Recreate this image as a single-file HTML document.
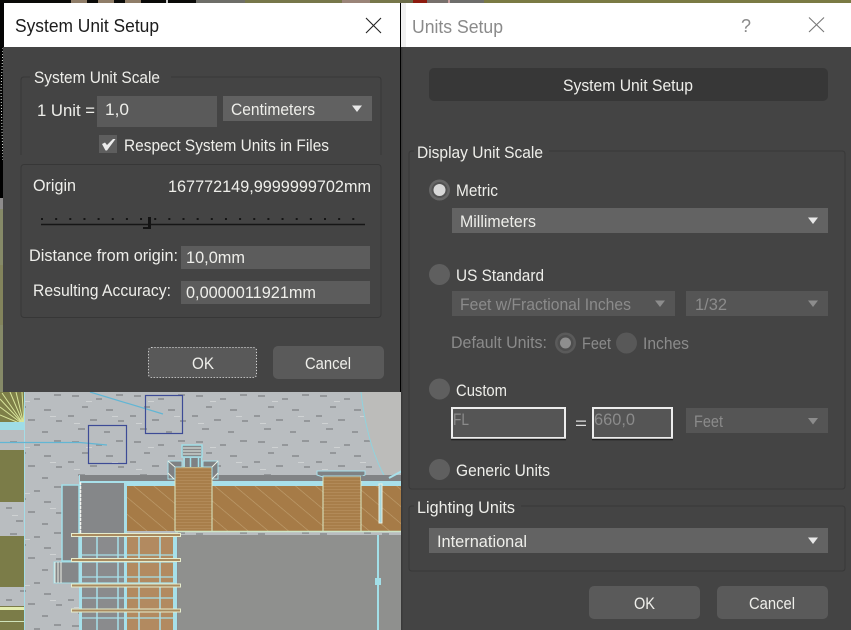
<!DOCTYPE html>
<html><head><meta charset="utf-8"><style>
html,body{margin:0;padding:0;width:851px;height:630px;overflow:hidden;background:#444}
svg{display:block}
text{font-family:"Liberation Sans",sans-serif;font-size:16.5px;fill:#eeeeea}
.d{fill:#8b8b8b}
</style></head><body>
<svg width="851" height="630" viewBox="0 0 851 630" xmlns="http://www.w3.org/2000/svg">
<defs>
<pattern id="b" width="62" height="46" patternUnits="userSpaceOnUse" x="4" y="392">
<g fill="#94979a">
<rect x="6" y="3" width="7" height="2"/><rect x="30" y="6" width="6" height="2"/><rect x="50" y="2" width="7" height="2"/>
<rect x="16" y="14" width="6" height="2"/><rect x="40" y="17" width="7" height="2"/><rect x="2" y="23" width="6" height="2"/>
<rect x="24" y="27" width="7" height="2"/><rect x="52" y="28" width="6" height="2"/><rect x="12" y="36" width="7" height="2"/><rect x="38" y="39" width="6" height="2"/>
</g>
<g fill="#cfd2d3"><rect x="20" y="9" width="6" height="1"/><rect x="46" y="24" width="6" height="1"/><rect x="8" y="31" width="6" height="1"/></g>
</pattern>
<pattern id="w" width="13" height="13" patternUnits="userSpaceOnUse" patternTransform="rotate(40)">
<rect width="13" height="13" fill="#a67b47"/><rect width="13" height="0.600" fill="#c0a070"/>
</pattern>
<pattern id="h" width="3" height="3" patternUnits="userSpaceOnUse">
<rect width="3" height="3" fill="#a87e4a"/><rect width="3" height="0.500" fill="#bb9566"/>
</pattern>
</defs>

<!-- background strips -->
<rect width="851" height="630" fill="#000"/>
<rect x="0" y="0" width="400" height="3" fill="#0a0a08"/>
<rect x="71" y="0" width="16" height="3" fill="#8f7d68"/><rect x="98" y="0" width="16" height="3" fill="#8f7d68"/>
<rect x="125" y="0" width="16" height="3" fill="#8f7d68"/>
<rect x="166" y="0" width="2" height="3" fill="#cccccc"/>
<rect x="196" y="0" width="49" height="3" fill="#6e6e68"/>
<rect x="245" y="0" width="97" height="3" fill="#77774a"/>
<rect x="342" y="0" width="28" height="3" fill="#9a8478"/>
<rect x="370" y="0" width="30" height="3" fill="#77774a"/>
<rect x="400" y="0" width="13" height="3" fill="#6a6a48"/>
<rect x="413" y="0" width="14" height="3" fill="#8d1b0e"/>
<rect x="427" y="0" width="21" height="3" fill="#77706c"/>
<rect x="448" y="0" width="2" height="3" fill="#c9a0a0"/>
<rect x="450" y="0" width="34" height="3" fill="#6e6e6c"/>
<rect x="484" y="0" width="367" height="3" fill="#7a7a44"/>
<!-- left strip -->
<rect x="0" y="3" width="4" height="155" fill="#050505"/>
<path d="M3 48 L1 90 L2 130 L3 160" stroke="#dfe5df" stroke-width="1" stroke-dasharray="1 2" fill="none"/>
<rect x="0" y="195" width="3" height="197" fill="#868a68"/>
<rect x="0" y="195" width="3" height="14" fill="#8e8c8c"/>
<rect x="0" y="265" width="3" height="60" fill="#83845c"/>
<rect x="0" y="160" width="3" height="38" fill="#000"/>

<!-- CAD drawing -->
<g>
<rect x="0" y="392" width="402" height="238" fill="#b9bdc0"/>
<rect x="0" y="392" width="402" height="238" fill="url(#b)"/>
<path d="M361 392 Q367 450 385 477 L402 472 L402 392 Z" fill="#bcbcba"/>
<path d="M361 392 Q367 445 385 477" stroke="#8fd3de" stroke-width="1" fill="none"/>
<!-- left olive parts -->
<rect x="0" y="392" width="24" height="36" fill="#7e7f48"/>
<path d="M24 425 L2 393 M24 425 L10 392 M24 425 L16 392 M24 425 L22 392 M24 425 L0 399 M24 425 L0 407 M24 425 L0 415" stroke="#d8e49a" stroke-width="1"/>
<rect x="0" y="422" width="25" height="8" fill="#9fdce6"/>
<rect x="0" y="450" width="24" height="52" fill="#7b7c48"/>
<rect x="0" y="536" width="24" height="51" fill="#7b7c48"/>
<rect x="0" y="606" width="25" height="24" fill="#7b7c48"/>
<rect x="0" y="607" width="25" height="3" fill="#e4edb0"/>
<rect x="0" y="621" width="25" height="1" fill="#cfe3ba"/>
<path d="M24.500 392V630" stroke="#a5dce6" stroke-width="1"/>
<path d="M0 442.500H80L107 445" stroke="#62b6d4" stroke-width="1.200" fill="none"/>
<path d="M90 392L163 414" stroke="#62b6d4" stroke-width="1.200"/>
<rect x="88.500" y="425.500" width="38" height="38" fill="none" stroke="#3d4b96" stroke-width="1.200"/>
<rect x="145.500" y="395.500" width="37" height="38" fill="none" stroke="#3d4b96" stroke-width="1.200"/>
<!-- top wall band -->
<rect x="79" y="475" width="323" height="6" fill="#818385"/>
<rect x="79" y="481" width="323" height="5" fill="#a8e0ea"/>
<path d="M79.500 475V535" stroke="#a8e0ea" stroke-width="1"/>
<!-- wood -->
<rect x="127" y="486" width="275" height="45" fill="url(#w)"/>
<rect x="175" y="467" width="37" height="64" fill="url(#h)"/>
<rect x="323" y="476" width="38" height="55" fill="url(#h)"/>
<path d="M175 531V467H212V531M323 531V476H361V531" fill="none" stroke="#dbe9c4" stroke-width="1"/>
<rect x="379" y="484" width="3" height="39" fill="#a5d5da" stroke="#e8f0e0" stroke-width="1"/>
<!-- caps -->
<path d="M168 461H182V467H175V479H168Z" fill="#7f8183" stroke="#a8e0ea" stroke-width="1"/>
<path d="M218 461H203V467H212V479H218Z" fill="#7f8183" stroke="#a8e0ea" stroke-width="1"/>
<path d="M168 461L175 467M218 461L212 467M168 473L174 479M218 473L212 479" stroke="#eef2e8" stroke-width="1"/>
<path d="M317 471H365V475L361 477V476H323V477L317 475Z" fill="#7f8183" stroke="#a8e0ea" stroke-width="1"/>
<rect x="361" y="476" width="28" height="5" fill="#818385"/>
<path d="M389 478L402 471" stroke="#a8e0ea" stroke-width="2"/>
<!-- top detail -->
<rect x="182" y="445" width="20" height="12" fill="#88898b" stroke="#a2dfe8" stroke-width="1.500"/>
<path d="M183 448H201M183 451H201M183 454H201" stroke="#e6eee8" stroke-width="1"/>
<path d="M185 458H201V467H185Z" fill="#7f8183"/>
<path d="M190.500 458v9M198.500 458v9M184 458v9M201.500 458v9" stroke="#a2dfe8" stroke-width="1.500"/>
<!-- left grey block -->
<rect x="62" y="485" width="17" height="76" fill="#838486" stroke="#a2dfe8" stroke-width="1.500"/>
<rect x="81" y="483" width="44" height="50" fill="#858789"/>
<path d="M80.500 482V533" stroke="#f2f4f0" stroke-width="1.500" stroke-dasharray="3 1"/>
<rect x="124" y="483" width="3" height="50" fill="#a8dde6"/>
<rect x="54" y="562" width="25" height="21" fill="#858789" stroke="#a2dfe8" stroke-width="1"/>
<path d="M55 562v21M58 562v21M61 562v21" stroke="#eef2e8" stroke-width="1"/>
<!-- floor -->
<rect x="178" y="535" width="224" height="95" fill="#8f908e"/>
<!-- lower grid -->
<rect x="79" y="535" width="99" height="95" fill="#8a8b8d"/>
<rect x="127" y="535" width="48" height="95" fill="#b28a60"/>
<path d="M97 535V630M118 535V630M139 535V630M160 535V630" stroke="#a6e0ea" stroke-width="1.500" fill="none"/>
<path d="M80 555H177M80 562H177M80 577H177M80 583H177M80 598H177M80 618H177" stroke="#a6e0ea" stroke-width="1.200"/>
<rect x="79" y="535" width="3" height="95" fill="#a6e0ea"/>
<rect x="173" y="535" width="4" height="95" fill="#a6e0ea"/>
<rect x="124" y="535" width="3" height="95" fill="#a6e0ea"/>
<path d="M175 531.500H402" stroke="#cde6c8" stroke-width="1.500"/>
<g fill="#a98b60" stroke="#e6eccc" stroke-width="1">
<rect x="71.500" y="533.500" width="109" height="3"/>
<rect x="71.500" y="558.500" width="109" height="3"/>
<rect x="71.500" y="584" width="109" height="3"/>
<rect x="71.500" y="609" width="109" height="3"/>
</g>
<path d="M378 535V630" stroke="#a2dfe8" stroke-width="2"/>
<rect x="375" y="578" width="6" height="7" fill="#a2dfe8"/>
</g>

<!-- LEFT dialog -->
<rect x="3" y="47" width="397" height="345" fill="#444444"/>
<rect x="4" y="3" width="396" height="44" fill="#ffffff"/>
<text x="15" y="32" style="font-size:18px;fill:#1c1c1c" textLength="144" lengthAdjust="spacingAndGlyphs">System Unit Setup</text>
<path d="M366 18L381 33M381 18L366 33" stroke="#222" stroke-width="1.100" fill="none"/>

<path d="M21 155V80q0-3 3-3H30M171 77H378q3 0 3 3V155" fill="none" stroke="#373737" stroke-width="1"/>
<text x="34" y="83" textLength="126" lengthAdjust="spacingAndGlyphs">System Unit Scale</text>
<text x="37" y="116" textLength="58" lengthAdjust="spacingAndGlyphs">1 Unit =</text>
<rect x="97" y="96" width="120" height="31" fill="#5a5a5a"/>
<text x="105" y="115" textLength="24" lengthAdjust="spacingAndGlyphs">1,0</text>
<rect x="223" y="96" width="149" height="25" fill="#616161"/>
<text x="231" y="115" textLength="84" lengthAdjust="spacingAndGlyphs">Centimeters</text>
<path d="M352 105.500H362L357 112Z" fill="#e8e8e8"/>
<rect x="99" y="135" width="18" height="18" fill="#5e5e5e"/>
<path d="M102 144L105 142.500L107 145L113 139H115.500L107 150.500H105.500Z" fill="#ececec"/>
<text x="124" y="151" textLength="205" lengthAdjust="spacingAndGlyphs">Respect System Units in Files</text>

<rect x="21" y="164.500" width="360" height="153" rx="3" fill="none" stroke="#373737" stroke-width="1"/>
<text x="33" y="191" textLength="43" lengthAdjust="spacingAndGlyphs">Origin</text>
<text x="168" y="192" textLength="203" lengthAdjust="spacingAndGlyphs">167772149,9999999702mm</text>
<path d="M41 219H366" stroke="#141414" stroke-width="2" stroke-dasharray="2 12.150"/>
<path d="M41 224.500H365" stroke="#161616" stroke-width="1.500"/>
<path d="M148 217H151V229H143V227H148Z" fill="#141414"/>
<text x="29" y="261" textLength="149" lengthAdjust="spacingAndGlyphs">Distance from origin:</text>
<rect x="181" y="246" width="189" height="23" fill="#5c5c5c"/>
<text x="186" y="263" textLength="59" lengthAdjust="spacingAndGlyphs">10,0mm</text>
<text x="33" y="296" textLength="138" lengthAdjust="spacingAndGlyphs">Resulting Accuracy:</text>
<rect x="181" y="281" width="189" height="23" fill="#5c5c5c"/>
<text x="186" y="298" textLength="130" lengthAdjust="spacingAndGlyphs">0,0000011921mm</text>

<rect x="148" y="347" width="109" height="31" rx="4" fill="#595959"/>
<rect x="148.500" y="347.500" width="108" height="30" rx="3" fill="none" stroke="#e6e6e6" stroke-width="1" stroke-dasharray="1 2"/>
<text x="192" y="369" textLength="22" lengthAdjust="spacingAndGlyphs">OK</text>
<rect x="273" y="346" width="111" height="33" rx="5" fill="#5a5a5a"/>
<text x="305" y="369" textLength="46" lengthAdjust="spacingAndGlyphs">Cancel</text>

<!-- RIGHT dialog -->
<rect x="401" y="47" width="450" height="583" fill="#444444"/>
<rect x="401" y="47" width="1.500" height="583" fill="#3a3a3a"/>
<rect x="401" y="3" width="450" height="44" fill="#ffffff"/>
<rect x="401" y="3" width="5" height="44" fill="#f0f0f0"/>
<text x="412" y="33" style="font-size:18px;fill:#8a8a8a" textLength="91" lengthAdjust="spacingAndGlyphs">Units Setup</text>
<text x="741" y="32" style="font-size:18px;fill:#8a8a8a">?</text>
<path d="M809 17.500L824 32M824 17.500L809 32" stroke="#777" stroke-width="1.100" fill="none"/>

<rect x="429" y="68" width="399" height="33" rx="5" fill="#373737"/>
<text x="563" y="91" textLength="130" lengthAdjust="spacingAndGlyphs">System Unit Setup</text>

<path d="M409 486V154q0-3 3-3H414M549 151H842q3 0 3 3V486q0 3-3 3H412q-3 0-3-3" fill="none" stroke="#383838" stroke-width="1"/>
<text x="417" y="158" textLength="126" lengthAdjust="spacingAndGlyphs">Display Unit Scale</text>

<circle cx="439.500" cy="190" r="10.500" fill="#666"/>
<circle cx="439.500" cy="190" r="8" fill="#525252"/>
<circle cx="439.500" cy="190" r="6" fill="#d8d8d8"/>
<text x="456" y="196" textLength="42" lengthAdjust="spacingAndGlyphs">Metric</text>
<rect x="452" y="208" width="376" height="25" fill="#636363"/>
<text x="460" y="227" textLength="76" lengthAdjust="spacingAndGlyphs">Millimeters</text>
<path d="M808 217.500H818L813 224Z" fill="#e8e8e8"/>

<circle cx="439.500" cy="274.500" r="10.500" fill="#5f5f5f"/>
<text x="456" y="281" textLength="88" lengthAdjust="spacingAndGlyphs">US Standard</text>
<rect x="452" y="291" width="223" height="25" fill="#555555"/>
<text x="460" y="310" class="d" textLength="171" lengthAdjust="spacingAndGlyphs">Feet w/Fractional Inches</text>
<path d="M655 300.500H665L660 307Z" fill="#8c8c8c"/>
<rect x="686" y="291" width="142" height="25" fill="#555555"/>
<text x="695" y="310" class="d" textLength="32" lengthAdjust="spacingAndGlyphs">1/32</text>
<path d="M808 300.500H818L813 307Z" fill="#8c8c8c"/>

<text x="451" y="348" class="d" textLength="96" lengthAdjust="spacingAndGlyphs">Default Units:</text>
<circle cx="565.500" cy="343" r="10.500" fill="#5a5a5a"/>
<circle cx="565.500" cy="343" r="8" fill="#4e4e4e"/>
<circle cx="565.500" cy="343" r="5.500" fill="#8e8e8e"/>
<text x="582" y="349" class="d" textLength="29" lengthAdjust="spacingAndGlyphs">Feet</text>
<circle cx="626.500" cy="343" r="10.500" fill="#585858"/>
<text x="643" y="349" class="d" textLength="46" lengthAdjust="spacingAndGlyphs">Inches</text>

<circle cx="439.500" cy="389" r="10.500" fill="#5f5f5f"/>
<text x="456" y="396" textLength="51" lengthAdjust="spacingAndGlyphs">Custom</text>
<rect x="452" y="408" width="113" height="30" fill="#555555" stroke="#ededed" stroke-width="2"/>
<path d="M451 439.500H566" stroke="#1e1e1e" stroke-width="1.500"/>
<text x="453" y="425" class="d" textLength="16" lengthAdjust="spacingAndGlyphs">FL</text>
<text x="575" y="429" style="fill:#dddddd" textLength="12" lengthAdjust="spacingAndGlyphs">=</text>
<rect x="593" y="408" width="79" height="30" fill="#555555" stroke="#ededed" stroke-width="2"/>
<path d="M592 439.500H673" stroke="#1e1e1e" stroke-width="1.500"/>
<text x="594" y="425" class="d" textLength="41" lengthAdjust="spacingAndGlyphs">660,0</text>
<rect x="686" y="408" width="142" height="25" fill="#555555"/>
<text x="694" y="427" class="d" textLength="29" lengthAdjust="spacingAndGlyphs">Feet</text>
<path d="M808 418H818L813 424.500Z" fill="#8c8c8c"/>

<circle cx="439.500" cy="469.500" r="10.500" fill="#5f5f5f"/>
<text x="456" y="476" textLength="94" lengthAdjust="spacingAndGlyphs">Generic Units</text>

<path d="M409 568V509q0-3 3-3H414M521 506H842q3 0 3 3V568q0 3-3 3H412q-3 0-3-3" fill="none" stroke="#383838" stroke-width="1"/>
<text x="417" y="513" textLength="98" lengthAdjust="spacingAndGlyphs">Lighting Units</text>
<rect x="429" y="528" width="399" height="25" fill="#636363"/>
<text x="437" y="547" textLength="90" lengthAdjust="spacingAndGlyphs">International</text>
<path d="M808 537.500H818L813 544Z" fill="#e8e8e8"/>

<rect x="589" y="586" width="111" height="33" rx="5" fill="#5a5a5a"/>
<text x="634" y="609" textLength="21" lengthAdjust="spacingAndGlyphs">OK</text>
<rect x="717" y="586" width="111" height="33" rx="5" fill="#5a5a5a"/>
<text x="749" y="609" textLength="46" lengthAdjust="spacingAndGlyphs">Cancel</text>
</svg>
</body></html>
